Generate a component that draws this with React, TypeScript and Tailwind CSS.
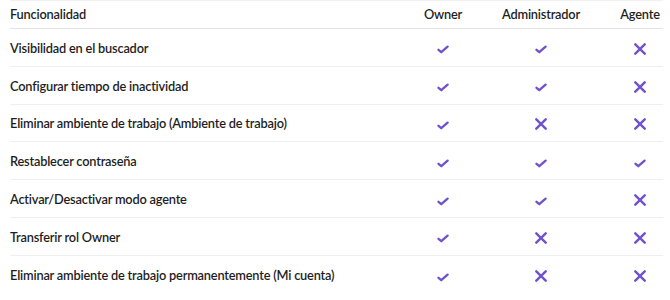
const rows: { label: string; owner: boolean; admin: boolean; agent: boolean }[] = [
  { label: "Visibilidad en el buscador", owner: true, admin: true, agent: false },
  { label: "Configurar tiempo de inactividad", owner: true, admin: true, agent: false },
  { label: "Eliminar ambiente de trabajo (Ambiente de trabajo)", owner: true, admin: false, agent: false },
  { label: "Restablecer contraseña", owner: true, admin: true, agent: true },
  { label: "Activar/Desactivar modo agente", owner: true, admin: true, agent: false },
  { label: "Transferir rol Owner", owner: true, admin: false, agent: false },
  { label: "Eliminar ambiente de trabajo permanentemente (Mi cuenta)", owner: true, admin: false, agent: false },
];

function Check() {
  return (
    <svg width="12" height="9" viewBox="0 0 12 9" className="mt-[3px]">
      <path d="M1.5 4.8 L4.3 7.2 L10.6 1.6" fill="none" stroke="#7152cc" strokeWidth="2.3" strokeLinecap="round" strokeLinejoin="round" />
    </svg>
  );
}

function Cross() {
  return (
    <svg width="12" height="12" viewBox="0 0 12 12" className="mt-[1px]">
      <path d="M1.3 1.3 L10.7 10.7 M10.7 1.3 L1.3 10.7" fill="none" stroke="#7152cc" strokeWidth="2.4" strokeLinecap="round" />
    </svg>
  );
}

const Mark = ({ ok }: { ok: boolean }) => (ok ? <Check /> : <Cross />);

export default function App() {
  return (
    <div
      className="w-[670px] h-[300px] bg-white pl-[10px] pr-[7px] text-[12.8px] tracking-[-0.2px] font-semibold text-[#1e1e1e]"
      style={{ fontFamily: 'Lato, "Noto Sans", sans-serif' }}
    >
      <div className="grid grid-cols-[1fr_44px_152px_46px] items-center h-[29px] border-t border-[#f1f1f1] border-b border-b-[#e2e2e2]">
        <span>Funcionalidad</span>
        <span className="text-center">Owner</span>
        <span className="text-center">Administrador</span>
        <span className="text-center">Agente</span>
      </div>
      {rows.map((r, i) => (
        <div
          key={r.label}
          className={
            "grid grid-cols-[1fr_44px_152px_46px] items-center h-[37.8px] pt-[2px] " +
            (i < rows.length - 1 ? "border-b border-[#efefef]" : "")
          }
        >
          <span>{r.label}</span>
          <span className="flex justify-center"><Mark ok={r.owner} /></span>
          <span className="flex justify-center"><Mark ok={r.admin} /></span>
          <span className="flex justify-center"><Mark ok={r.agent} /></span>
        </div>
      ))}
    </div>
  );
}
